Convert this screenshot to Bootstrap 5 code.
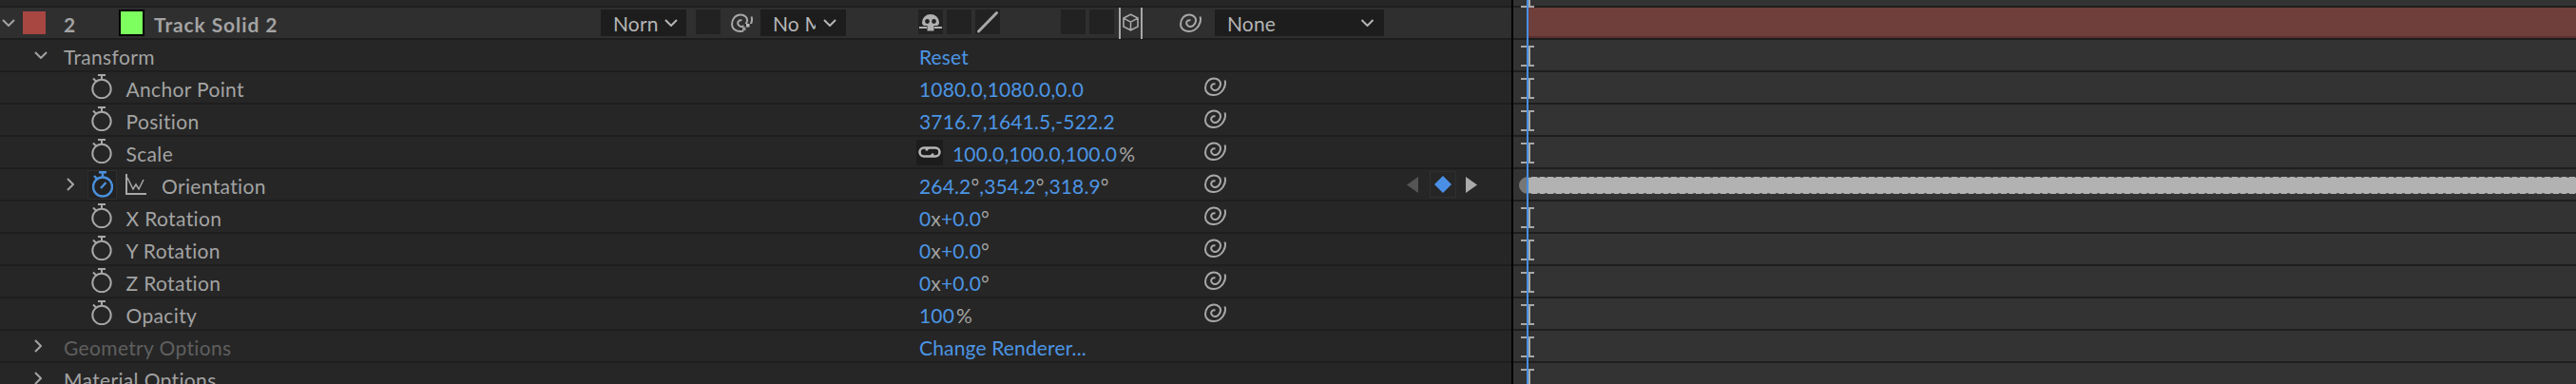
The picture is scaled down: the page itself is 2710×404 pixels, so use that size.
<!DOCTYPE html>
<html lang="en">
<head>
<meta charset="UTF-8">
<title>Timeline</title>
<link rel="stylesheet" href="https://cdn.jsdelivr.net/npm/bootstrap@5.3.3/dist/css/bootstrap.min.css">
<style>
    html, body { margin: 0; height: 404px; overflow: hidden; background: #262626; }
    .tl { position: relative; width: 2710px; height: 404px; overflow: hidden; font-family: Lato, "Liberation Sans", sans-serif; font-size: 21px; letter-spacing: .15px; line-height: 24px; color: #a3a3a3; white-space: nowrap; }
    .tl-row { height: 34px; overflow: hidden; }
    .tl-row.first { height: 8px; }
    .tl-left { width: 1590px; flex: none; background: #262626; border-bottom: 2px solid #1e1e1e; }
    .tl-time { width: 1120px; flex: none; background: #333; border-left: 2px solid #000; box-shadow: inset 0 -2px #1e1e1e; padding-bottom: 2px; }
    .layer-row .tl-left { background: #2f2f2f; }

    .name-col { width: 967px; flex: none; }
    .name-col .txt { letter-spacing: .35px; }
    .val-col { width: 300px; flex: none; color: #4c95e4; }
    .exp-col { width: 24px; height: 20px; flex: none; margin-top: -2px; }
    .txt { padding-top: 3px; }
    .dim { color: #a3a3a3; }
    .off { color: #5f5f5f; }
    .pct { margin-left: 2px; }

    .chev { flex: none; stroke: #a3a3a3; fill: none; stroke-width: 2; }
    .ind-group { margin-left: 36px; width: 31px; }
    .ind-closed { margin-left: 36px; width: 31px; }
    .ind-prop { margin-left: 96px; }
    .ind-key { margin-left: 70px; width: 22px; }
    .watch { width: 22px; height: 26px; flex: none; margin-right: 14.5px; margin-top: -2px; }
    .watch-box { width: 31px; height: 31px; background: #222; border: 1px solid #2e2e2e; margin-right: 9px; }
    .watch-box .watch { margin: 0; height: 28px; }
    .graph { width: 22px; height: 22px; margin-right: 16px; flex: none; }

    .ls-chev { margin-left: 2px; }
    .ls-red { width: 24px; height: 24px; margin-left: 8px; background: #a84642; flex: none; }
    .ls-num { margin-left: 19px; width: 58px; font-weight: 700; }
    .ls-green { width: 27px; height: 28px; background: #7dff5f; border: 2px solid #000; flex: none; }
    .ls-name { margin-left: 10px; font-weight: 700; letter-spacing: .9px; width: 470px; flex: none; }

    .drop { height: 28px; background: #1d1d1d; flex: none; overflow: hidden; color: #b5b5b5; padding-left: 13px; }
    .drop span { overflow: hidden; flex: none; padding-top: 2px; }
    .drop .chev { stroke: #b5b5b5; }
    .drop-mode { width: 90px; }
    .drop-mode span { width: 49px; margin-right: 5px; }
    .drop-mat { width: 90px; }
    .drop-mat span { width: 45px; margin-right: 8px; }
    .drop-none { width: 178px; margin-left: 13px; }
    .drop-none span { width: 140px; }
    .sq { width: 26px; height: 26px; background: #222; flex: none; margin-top: -2px; }
    .sq-a { margin-left: 10px; }
    .sq-b { margin-left: 4px; }
    .sq-c { margin-left: 64px; }
    .spiral { width: 24px; height: 20px; flex: none; }
    .sp-mode { margin-left: 11px; margin-right: 8px; width: 23px; height: 20px; overflow: hidden; flex: none; }
    .sw-first { margin-left: 76px; }
    .cube-cell { width: 25px; height: 34px; flex: none; margin-left: 5px; margin-top: -1px; border-left: 2px solid #a8a8a8; border-right: 2px solid #a8a8a8; }
    .sp-3d { margin-left: 39px; }

    .link-box { width: 28px; height: 27px; background: #1c1c1c; margin-left: -3px; margin-right: 10px; flex: none; }
    .key-nav { margin-left: 189px; }
    .key-box { width: 28px; height: 28px; border: 1px solid #303030; margin: 0 10px 0 12px; }

    .ibar { width: 14px; height: 22px; margin-left: 8px; margin-top: 6px; flex: none; display: block; }
    .ibar.top { margin-top: -14px; }
    .red-bar { height: 32px; flex: 1; margin-left: 16px; background: #6f3f3c; border-bottom: 2px solid #5a3130; }
    .key-bar { margin-left: 6px; margin-top: 8px; height: 18px; flex: 1; display: flex; }
    .key-cap { width: 10px; background: #777; border-radius: 9px 0 0 9px; flex: none; }
    .key-fill { flex: 1; background: #b2b2b2; position: relative; }
    .key-fill::before, .key-fill::after { content: ""; position: absolute; left: 0; right: 0; height: 1px; background: repeating-linear-gradient(90deg, #5c5c5c 0 3px, transparent 3px 8.67px); }
    .key-fill::before { top: 0; }
    .key-fill::after { bottom: 0; }
    .playhead { position: absolute; left: 1606px; top: 0; bottom: 0; width: 2px; background: #4a8fdf; }
</style>
</head>
<body>
<svg width="0" height="0" class="position-absolute">
    <symbol id="i-spiral" viewBox="0 0 24 20">
        <path d="M21.500 3.500C23.500 9 19 18.800 10 19C4 19.200 1 15.500 1 11.500C1 6 5 1.500 10 1.500C14.500 1.500 17.500 4.500 17 8C16.500 12 13 14.500 10.500 14C8 13.500 6.500 11 7.500 9C8.300 7.500 10 7 11.500 7.500" fill="none" stroke="#a8a8a8" stroke-width="2"/>
    </symbol>
    <symbol id="i-watch" viewBox="0 0 22 26">
        <circle cx="11" cy="15.500" r="9.700" fill="none" stroke="#a8a8a8" stroke-width="2"/>
        <path d="M7 1h8M11 1v5M2 4.500l3 3" fill="none" stroke="#a8a8a8" stroke-width="2"/>
    </symbol>
    <symbol id="i-watch-on" viewBox="0 0 22 28">
        <circle cx="11" cy="16.500" r="10" fill="none" stroke="#4a90dc" stroke-width="2.400"/>
        <path d="M7 1.200h8M11 1v5M2 5l3 3M9 18l5.500-6" fill="none" stroke="#4a90dc" stroke-width="2.400"/>
    </symbol>
    <symbol id="i-ibar" viewBox="0 0 14 22">
        <path d="M0 1h14M0 21h14M9 1v20" fill="none" stroke="#a8a8a8" stroke-width="2"/>
    </symbol>
    <symbol id="i-down" viewBox="0 0 14 8">
        <path d="M1 1l6 6 6-6"/>
    </symbol>
    <symbol id="i-right" viewBox="0 0 8 14">
        <path d="M1 1l6 6-6 6"/>
    </symbol>
</svg>

<div class="tl">
    <div class="tl-row first d-flex">
        <div class="tl-left"></div>
        <div class="tl-time d-flex"><svg class="ibar top"><use href="#i-ibar"/></svg></div>
    </div>

    <div class="tl-row layer-row d-flex">
        <div class="tl-left d-flex align-items-center">
            <svg class="chev ls-chev" width="14" height="8"><use href="#i-down"/></svg>
            <div class="ls-red"></div>
            <div class="ls-num txt">2</div>
            <div class="ls-green"></div>
            <div class="ls-name txt">Track Solid 2</div>
            <div class="drop drop-mode d-flex align-items-center"><span>Norn</span><svg class="chev" width="14" height="8"><use href="#i-down"/></svg></div>
            <div class="sq sq-a"></div>
            <svg class="sp-mode" viewBox="0 0 23 20">
                <use href="#i-spiral" width="24" height="20"/>
                <rect x="13.500" y="11" width="9.500" height="9" fill="#2f2f2f"/>
                <rect x="12" y="14.500" width="3.500" height="3.500" fill="#999"/>
                <rect x="16" y="11" width="3.500" height="3.500" fill="#bbb"/>
            </svg>
            <div class="drop drop-mat d-flex align-items-center"><span>No M</span><svg class="chev" width="14" height="8"><use href="#i-down"/></svg></div>
            <div class="sq sw-first d-flex align-items-center justify-content-center">
                <svg width="26" height="26" viewBox="0 0 26 26">
                    <path d="M4 13.500a9 8.500 0 0 1 18 0c0 1.800-.8 3-2 3.500h-3.500v5.500h-7V17H6c-1.200-.5-2-1.700-2-3.500z" fill="#b0b0b0"/>
                    <circle cx="9.500" cy="12.500" r="2.400" fill="#222"/><circle cx="16.500" cy="12.500" r="2.400" fill="#222"/>
                    <path d="M1 19h8M17 19h8" stroke="#b0b0b0" stroke-width="2"/>
                </svg>
            </div>
            <div class="sq sq-b"></div>
            <div class="sq sq-b d-flex align-items-center justify-content-center">
                <svg width="26" height="26" viewBox="0 0 26 26"><path d="M3.500 23L22.500 3.500" stroke="#a8a8a8" stroke-width="3" stroke-linecap="round"/></svg>
            </div>
            <div class="sq sq-c"></div>
            <div class="sq sq-b"></div>
            <div class="cube-cell d-flex align-items-center justify-content-center">
                <svg width="19" height="19" viewBox="0 0 19 19"><path d="M9.500 1.200l7.500 3.900v8.800l-7.500 3.900L2 13.900V5.100zM2 5.100l7.500 4 7.500-4M9.500 9.100v8.700" fill="none" stroke="#a8a8a8" stroke-width="1.600"/></svg>
            </div>
            <svg class="spiral sp-3d"><use href="#i-spiral"/></svg>
            <div class="drop drop-none d-flex align-items-center"><span>None</span><svg class="chev" width="15" height="8"><use href="#i-down"/></svg></div>
        </div>
        <div class="tl-time d-flex"><div class="red-bar"></div></div>
    </div>

    <div class="tl-row d-flex">
        <div class="tl-left d-flex align-items-center">
            <div class="name-col d-flex align-items-center">
                <div class="ind-group"><svg class="chev d-block" width="14" height="8"><use href="#i-down"/></svg></div>
                <div class="txt">Transform</div>
            </div>
            <div class="val-col txt">Reset</div>
        </div>
        <div class="tl-time d-flex"><svg class="ibar"><use href="#i-ibar"/></svg></div>
    </div>

    <div class="tl-row d-flex">
        <div class="tl-left d-flex align-items-center">
            <div class="name-col d-flex align-items-center">
                <svg class="watch ind-prop"><use href="#i-watch"/></svg>
                <div class="txt">Anchor Point</div>
            </div>
            <div class="val-col txt">1080.0,1080.0,0.0</div>
            <svg class="exp-col"><use href="#i-spiral"/></svg>
        </div>
        <div class="tl-time d-flex"><svg class="ibar"><use href="#i-ibar"/></svg></div>
    </div>

    <div class="tl-row d-flex">
        <div class="tl-left d-flex align-items-center">
            <div class="name-col d-flex align-items-center">
                <svg class="watch ind-prop"><use href="#i-watch"/></svg>
                <div class="txt">Position</div>
            </div>
            <div class="val-col txt">3716.7,1641.5,-522.2</div>
            <svg class="exp-col"><use href="#i-spiral"/></svg>
        </div>
        <div class="tl-time d-flex"><svg class="ibar"><use href="#i-ibar"/></svg></div>
    </div>

    <div class="tl-row d-flex">
        <div class="tl-left d-flex align-items-center">
            <div class="name-col d-flex align-items-center">
                <svg class="watch ind-prop"><use href="#i-watch"/></svg>
                <div class="txt">Scale</div>
            </div>
            <div class="val-col d-flex align-items-center">
                <div class="link-box d-flex align-items-center justify-content-center">
                    <svg width="24" height="12" viewBox="0 0 24 12"><path d="M15.500 7.500C15 9.500 13.500 10.500 12 10.500H6A4.500 4.500 0 0 1 6 1.500H13M8.500 4.500C9 2.500 10.500 1.500 12 1.500H18A4.500 4.500 0 0 1 18 10.500H11" fill="none" stroke="#b5b5b5" stroke-width="2.600"/></svg>
                </div>
                <div class="txt">100.0,100.0,100.0<span class="dim pct">%</span></div>
            </div>
            <svg class="exp-col"><use href="#i-spiral"/></svg>
        </div>
        <div class="tl-time d-flex"><svg class="ibar"><use href="#i-ibar"/></svg></div>
    </div>

    <div class="tl-row d-flex">
        <div class="tl-left d-flex align-items-center">
            <div class="name-col d-flex align-items-center">
                <div class="ind-key"><svg class="chev d-block" width="8" height="14"><use href="#i-right"/></svg></div>
                <div class="watch-box d-flex align-items-center justify-content-center"><svg class="watch" viewBox="0 0 22 28"><use href="#i-watch-on"/></svg></div>
                <svg class="graph" viewBox="0 0 22 22"><path d="M1 0v21h21" fill="none" stroke="#a8a8a8" stroke-width="2"/><path d="M2 4l6 12 3-5 3 5 5-10" fill="none" stroke="#a8a8a8" stroke-width="1.500"/></svg>
                <div class="txt">Orientation</div>
            </div>
            <div class="val-col txt">264.2<span class="dim">°</span>,354.2<span class="dim">°</span>,318.9<span class="dim">°</span></div>
            <svg class="exp-col"><use href="#i-spiral"/></svg>
            <div class="key-nav d-flex align-items-center">
                <svg width="12" height="17" viewBox="0 0 12 17"><path d="M12 0v17L0 8.500z" fill="#555"/></svg>
                <div class="key-box d-flex align-items-center justify-content-center">
                    <svg width="18" height="18" viewBox="0 0 18 18"><path d="M9 0l9 9-9 9-9-9z" fill="#4a8fe6"/></svg>
                </div>
                <svg width="12" height="17" viewBox="0 0 12 17"><path d="M0 0v17l12-8.500z" fill="#aaa"/></svg>
            </div>
        </div>
        <div class="tl-time d-flex">
            <div class="key-bar"><div class="key-cap"></div><div class="key-fill"></div></div>
        </div>
    </div>

    <div class="tl-row d-flex">
        <div class="tl-left d-flex align-items-center">
            <div class="name-col d-flex align-items-center">
                <svg class="watch ind-prop"><use href="#i-watch"/></svg>
                <div class="txt">X Rotation</div>
            </div>
            <div class="val-col txt">0<span class="dim">x</span>+0.0<span class="dim">°</span></div>
            <svg class="exp-col"><use href="#i-spiral"/></svg>
        </div>
        <div class="tl-time d-flex"><svg class="ibar"><use href="#i-ibar"/></svg></div>
    </div>

    <div class="tl-row d-flex">
        <div class="tl-left d-flex align-items-center">
            <div class="name-col d-flex align-items-center">
                <svg class="watch ind-prop"><use href="#i-watch"/></svg>
                <div class="txt">Y Rotation</div>
            </div>
            <div class="val-col txt">0<span class="dim">x</span>+0.0<span class="dim">°</span></div>
            <svg class="exp-col"><use href="#i-spiral"/></svg>
        </div>
        <div class="tl-time d-flex"><svg class="ibar"><use href="#i-ibar"/></svg></div>
    </div>

    <div class="tl-row d-flex">
        <div class="tl-left d-flex align-items-center">
            <div class="name-col d-flex align-items-center">
                <svg class="watch ind-prop"><use href="#i-watch"/></svg>
                <div class="txt">Z Rotation</div>
            </div>
            <div class="val-col txt">0<span class="dim">x</span>+0.0<span class="dim">°</span></div>
            <svg class="exp-col"><use href="#i-spiral"/></svg>
        </div>
        <div class="tl-time d-flex"><svg class="ibar"><use href="#i-ibar"/></svg></div>
    </div>

    <div class="tl-row d-flex">
        <div class="tl-left d-flex align-items-center">
            <div class="name-col d-flex align-items-center">
                <svg class="watch ind-prop"><use href="#i-watch"/></svg>
                <div class="txt">Opacity</div>
            </div>
            <div class="val-col txt">100<span class="dim pct">%</span></div>
            <svg class="exp-col"><use href="#i-spiral"/></svg>
        </div>
        <div class="tl-time d-flex"><svg class="ibar"><use href="#i-ibar"/></svg></div>
    </div>

    <div class="tl-row d-flex">
        <div class="tl-left d-flex align-items-center">
            <div class="name-col d-flex align-items-center">
                <div class="ind-closed"><svg class="chev d-block" width="8" height="14"><use href="#i-right"/></svg></div>
                <div class="txt off">Geometry Options</div>
            </div>
            <div class="val-col txt">Change Renderer...</div>
        </div>
        <div class="tl-time d-flex"><svg class="ibar"><use href="#i-ibar"/></svg></div>
    </div>

    <div class="tl-row d-flex">
        <div class="tl-left d-flex align-items-center">
            <div class="name-col d-flex align-items-center">
                <div class="ind-closed"><svg class="chev d-block" width="8" height="14"><use href="#i-right"/></svg></div>
                <div class="txt">Material Options</div>
            </div>
        </div>
        <div class="tl-time d-flex"><svg class="ibar"><use href="#i-ibar"/></svg></div>
    </div>

    <div class="playhead"></div>
</div>
<script src="https://cdn.jsdelivr.net/npm/bootstrap@5.3.3/dist/js/bootstrap.bundle.min.js"></script>
</body>
</html>
